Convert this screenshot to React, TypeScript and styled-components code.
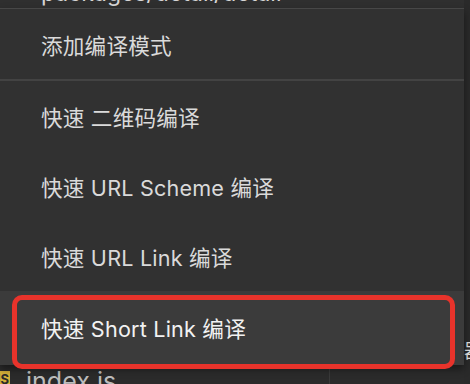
import styled, { createGlobalStyle } from "styled-components";

const GlobalStyle = createGlobalStyle`
    html, body {
        margin: 0;
        padding: 0;
        background: #2b2b2b;
    }
    body {
        font-family: "Inter", "Noto Sans CJK SC", sans-serif;
    }
`;

const Page = styled.div`
    width: 470px;
    height: 384px;
    overflow: hidden;
    display: grid;
    grid-template-columns: 464px 6px;
    background: #2b2b2b;
`;

const Main = styled.div`
    display: flex;
    flex-direction: column;
    min-width: 0;
`;

const Peek = styled.div`
    height: 8px;
    overflow: hidden;
    background: #2f2f2f;
    padding-left: 41px;
    span {
        display: block;
        margin-top: -18px;
        font-size: 23px;
        line-height: 22px;
        color: #d6d6d6;
        white-space: nowrap;
    }
`;

const Menu = styled.ul`
    list-style: none;
    margin: 0;
    padding: 0;
    background: #313131;
    border-top: 1px solid #474747;
    box-shadow: 0 4px 8px rgba(0, 0, 0, 0.45);
    position: relative;
    z-index: 1;
`;

const Item = styled.li<{ $active?: boolean }>`
    position: relative;
    height: ${(p) => (p.$active ? 74 : 70)}px;
    display: flex;
    align-items: center;
    padding-left: 41px;
    padding-bottom: ${(p) => (p.$active ? 2 : 0)}px;
    box-sizing: border-box;
    font-size: 21.6px;
    letter-spacing: 0.2px;
    color: ${(p) => (p.$active ? "#f2f2f2" : "#dadada")};
    background: ${(p) => (p.$active ? "#3b3b3b" : "transparent")};
`;

const Separator = styled.li`
    height: 2px;
    background: #434343;
`;

const Highlight = styled.span`
    position: absolute;
    left: 12px;
    right: 9px;
    top: 4px;
    bottom: -4px;
    border: 5px solid #e8332b;
    border-radius: 10px;
    pointer-events: none;
`;

const FileRow = styled.div`
    flex: 1;
    display: grid;
    grid-template-columns: 330px 1fr;
    background: #2b2b2b;
`;

const FileCell = styled.div`
    display: flex;
    align-items: flex-start;
    gap: 16px;
    overflow: hidden;
    border-right: 1px solid #3a3a3a;
`;

const JsBadge = styled.span`
    margin-left: -11px;
    margin-top: 6px;
    width: 20px;
    height: 16px;
    background: #d6b13a;
    color: #2b2b2b;
    font-size: 13px;
    font-weight: 700;
    line-height: 16px;
    text-align: right;
    padding-right: 1px;
    flex-shrink: 0;
`;

const FileName = styled.span`
    font-size: 25px;
    line-height: 32px;
    color: #bdbdbd;
`;

const Strip = styled.div`
    background: #2a2a2a;
    overflow: hidden;
    padding-top: 341px;
    font-size: 19px;
    line-height: 22px;
    color: #e6e6e6;
    white-space: nowrap;
`;

const quick = [
    "快速 二维码编译",
    "快速 URL Scheme 编译",
    "快速 URL Link 编译",
];

function App() {
    return (
        <>
            <GlobalStyle />
            <Page>
                <Main>
                    <Peek>
                        <span>packages/detail/detail</span>
                    </Peek>
                    <Menu>
                        <Item>添加编译模式</Item>
                        <Separator />
                        {quick.map((label) => (
                            <Item key={label}>{label}</Item>
                        ))}
                        <Item $active>
                            快速 Short Link 编译
                            <Highlight />
                        </Item>
                    </Menu>
                    <FileRow>
                        <FileCell>
                            <JsBadge>JS</JsBadge>
                            <FileName>index.js</FileName>
                        </FileCell>
                        <div />
                    </FileRow>
                </Main>
                <Strip>器</Strip>
            </Page>
        </>
    );
}

export default App;
